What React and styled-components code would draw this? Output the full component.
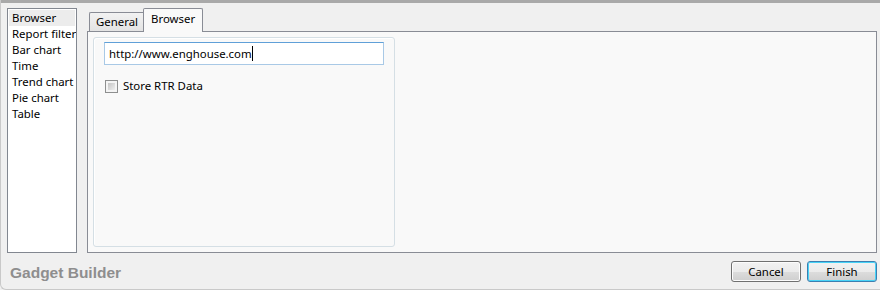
import React from "react";
import styled, { createGlobalStyle } from "styled-components";

const Global = createGlobalStyle`
  html, body { margin: 0; padding: 0; background: #f0f0f0; }
  body { font-family: "Noto Sans", "Open Sans", sans-serif; }
`;

const Window = styled.div`
  width: 880px;
  height: 290px;
  box-sizing: border-box;
  background: #f0f0f0;
  display: flex;
  flex-direction: column;
  border-left: 1px solid #c9c9c9;
  border-bottom: 1px solid #c9c9c9;
  border-bottom-left-radius: 6px;
  overflow: hidden;
`;

const TopBar = styled.div`
  height: 3px;
  background: #a9a9a9;
  flex: none;
`;

const Body = styled.div`
  display: flex;
  padding: 5px 3px 0 6px;
  gap: 10px;
  height: 245px;
  flex: none;
`;

const List = styled.ul`
  list-style: none;
  margin: 0;
  padding: 1px 1px;
  width: 70px;
  box-sizing: border-box;
  height: 245px;
  background: #fff;
  border: 1px solid #828790;
  flex: none;
  overflow: hidden;
`;

const ListItem = styled.li`
  font-size: 11.4px;
  line-height: 16px;
  height: 16px;
  padding-left: 3px;
  color: #000;
  white-space: nowrap;
  background: ${(p) => (p.$selected ? "#ececec" : "transparent")};
`;

const Tabs = styled.div`
  flex: 1;
  display: flex;
  flex-direction: column;
`;

const TabStrip = styled.div`
  display: flex;
  align-items: flex-end;
  height: 23px;
  padding-left: 2px;
  flex: none;
`;

const Tab = styled.div`
  box-sizing: border-box;
  font-size: 11.4px;
  color: #000;
  border: 1px solid #898c95;
  border-bottom: none;
  display: flex;
  justify-content: center;
  ${(p) =>
    p.$active
      ? `
    height: 24px;
    margin-bottom: -1px;
    background: #f9f9f9;
    padding: 2px 7px 0 7px;
    align-items: flex-start;
    position: relative;
    z-index: 1;
    border-top-left-radius: 2px;
    border-top-right-radius: 2px;
  `
      : `
    height: 19px;
    background: linear-gradient(#f2f2f2, #e3e3e3);
    padding: 1px 5px 0 6px;
    border-right: none;
    border-top-left-radius: 2px;
    align-items: flex-start;
  `}
`;

const Panel = styled.div`
  flex: 1;
  box-sizing: border-box;
  border: 1px solid #898c95;
  background: #f9f9f9;
  padding: 5px 0 5px 5px;
  display: flex;
`;

const Group = styled.div`
  width: 302px;
  box-sizing: border-box;
  border: 1px solid #d5dfe5;
  border-radius: 3px;
  padding: 4px 10px 0 10px;
  display: flex;
  flex-direction: column;
  box-shadow: inset 1px 1px 0 #fff;
`;

const TextBox = styled.div`
  box-sizing: border-box;
  height: 23px;
  background: #fff;
  border: 1px solid #a9c9e6;
  border-top-color: #5fa0d8;
  font-size: 11.4px;
  color: #000;
  padding: 0 4px 1px;
  display: flex;
  align-items: center;
`;

const Caret = styled.span`
  display: inline-block;
  width: 1px;
  height: 15px;
  background: #000;
`;

const CheckRow = styled.label`
  display: flex;
  align-items: center;
  gap: 5px;
  margin-top: 14px;
  margin-left: 1px;
  font-size: 11.4px;
  line-height: 14px;
  color: #000;
`;

const CheckBox = styled.span`
  box-sizing: border-box;
  width: 13px;
  height: 13px;
  border: 1px solid #8e8f8f;
  background: #f4f4f4;
  flex: none;
  position: relative;
  &::after {
    content: "";
    position: absolute;
    inset: 2px;
    background: linear-gradient(135deg, #c4c4c4, #eeeeee);
  }
`;

const Footer = styled.div`
  flex: 1;
  display: flex;
  align-items: center;
  justify-content: space-between;
  padding: 0 3px 1px 9px;
`;

const Title = styled.div`
  font-family: "Liberation Sans", Arial, sans-serif;
  font-weight: bold;
  font-size: 15.5px;
  color: #8e8e8e;
  padding-top: 4px;
`;

const Buttons = styled.div`
  display: flex;
  gap: 6px;
  padding-top: 2px;
`;

const Button = styled.button`
  box-sizing: border-box;
  width: 70px;
  height: 21px;
  font-family: "Noto Sans", "Open Sans", sans-serif;
  font-size: 11.4px;
  color: #000;
  border: 1px solid ${(p) => (p.$default ? "#3c7fb1" : "#707070")};
  border-radius: 3px;
  background: linear-gradient(#f2f2f2 0%, #ebebeb 50%, #dddddd 51%, #cfcfcf 100%);
  box-shadow: ${(p) => (p.$default ? "inset 0 0 0 1px #48d3f7" : "inset 0 0 0 1px #fcfcfc")};
  padding: 0;
  line-height: 17px;
`;

const items = ["Browser", "Report filter", "Bar chart", "Time", "Trend chart", "Pie chart", "Table"];

export default function App() {
  return (
    <>
      <Global />
      <Window>
        <TopBar />
        <Body>
          <List>
            {items.map((it, i) => (
              <ListItem key={it} $selected={i === 0}>
                {it}
              </ListItem>
            ))}
          </List>
          <Tabs>
            <TabStrip>
              <Tab>General</Tab>
              <Tab $active>Browser</Tab>
            </TabStrip>
            <Panel>
              <Group>
                <TextBox>
                  http://www.enghouse.com
                  <Caret />
                </TextBox>
                <CheckRow>
                  <CheckBox />
                  Store RTR Data
                </CheckRow>
              </Group>
            </Panel>
          </Tabs>
        </Body>
        <Footer>
          <Title>Gadget Builder</Title>
          <Buttons>
            <Button>Cancel</Button>
            <Button $default>Finish</Button>
          </Buttons>
        </Footer>
      </Window>
    </>
  );
}
